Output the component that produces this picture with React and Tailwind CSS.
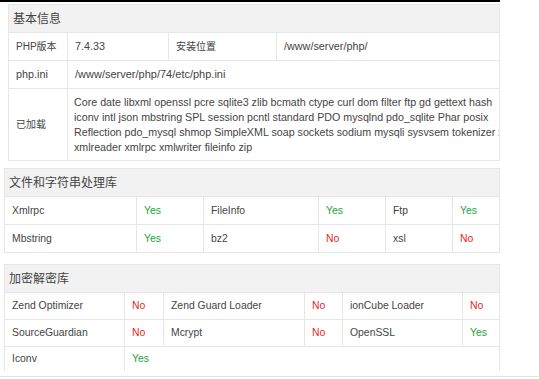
import React from "react";

const Yes = () => <span className="text-[#20a53a]">Yes</span>;
const No = () => <span className="text-[#ee1c1c]">No</span>;

const B = "border-[#e6e6e6]";

function Header({ children }) {
  return (
    <div className={`h-[28px] flex items-center pl-[4px] bg-[#f2f2f2] border-b ${B} text-[12px] text-[#444]`}>
      {children}
    </div>
  );
}

function Cell({ w, children, last, cls = "" }) {
  return (
    <div
      className={`${w} ${last ? "flex-1" : `border-r ${B}`} flex items-center pl-[7px] whitespace-nowrap overflow-hidden ${cls}`}
    >
      {children}
    </div>
  );
}

export default function App() {
  return (
    <div className="w-[539px] h-[379px] bg-white overflow-hidden font-['Liberation_Sans','Noto_Sans_CJK_SC',sans-serif] text-[10.4px] text-[#444]">
      <div className="h-[2px] w-[500px] bg-black" />

      {/* Panel 1 */}
      <div className={`ml-[8px] mt-[2px] w-[492px] border ${B} overflow-hidden`}>
        <Header>基本信息</Header>
        <div className={`flex h-[28px] border-b ${B}`}>
          <Cell w="w-[59px]" cls="text-[10px]">PHP版本</Cell>
          <Cell w="w-[101px]" cls="text-[10.8px]">7.4.33</Cell>
          <Cell w="w-[108px]" cls="text-[10px]">安装位置</Cell>
          <Cell last cls="text-[10.8px]">/www/server/php/</Cell>
        </div>
        <div className={`flex h-[28px] border-b ${B}`}>
          <Cell w="w-[59px]" cls="text-[10.8px]">php.ini</Cell>
          <Cell last cls="text-[11px]">/www/server/php/74/etc/php.ini</Cell>
        </div>
        <div className="flex h-[71px]">
          <Cell w="w-[59px]" cls="text-[10px]">已加载</Cell>
          <div className="flex-1 flex flex-col justify-center pl-[6px] overflow-hidden whitespace-nowrap leading-[15px] text-[10.7px]">
            <div>Core date libxml openssl pcre sqlite3 zlib bcmath ctype curl dom filter ftp gd gettext hash</div>
            <div>iconv intl json mbstring SPL session pcntl standard PDO mysqlnd pdo_sqlite Phar posix</div>
            <div>Reflection pdo_mysql shmop SimpleXML soap sockets sodium mysqli sysvsem tokenizer xml</div>
            <div>xmlreader xmlrpc xmlwriter fileinfo zip</div>
          </div>
        </div>
      </div>

      {/* Panel 2 */}
      <div className={`ml-[4px] mt-[7px] w-[496px] border ${B}`}>
        <Header>文件和字符串处理库</Header>
        <div className={`flex h-[28px] border-b ${B}`}>
          <Cell w="w-[132px]">Xmlrpc</Cell>
          <Cell w="w-[67px]"><Yes /></Cell>
          <Cell w="w-[115px]">FileInfo</Cell>
          <Cell w="w-[67px]"><Yes /></Cell>
          <Cell w="w-[67px]">Ftp</Cell>
          <Cell last><Yes /></Cell>
        </div>
        <div className="flex h-[27px]">
          <Cell w="w-[132px]">Mbstring</Cell>
          <Cell w="w-[67px]"><Yes /></Cell>
          <Cell w="w-[115px]">bz2</Cell>
          <Cell w="w-[67px]"><No /></Cell>
          <Cell w="w-[67px]">xsl</Cell>
          <Cell last><No /></Cell>
        </div>
      </div>

      {/* Panel 3 */}
      <div className={`ml-[4px] mt-[11px] w-[496px] border-l border-r border-t ${B}`}>
        <Header>加密解密库</Header>
        <div className={`flex h-[27px] border-b ${B}`}>
          <Cell w="w-[120px]">Zend Optimizer</Cell>
          <Cell w="w-[39px]"><No /></Cell>
          <Cell w="w-[141px]">Zend Guard Loader</Cell>
          <Cell w="w-[38px]"><No /></Cell>
          <Cell w="w-[120px]">ionCube Loader</Cell>
          <Cell last><No /></Cell>
        </div>
        <div className={`flex h-[27px] border-b ${B}`}>
          <Cell w="w-[120px]">SourceGuardian</Cell>
          <Cell w="w-[39px]"><No /></Cell>
          <Cell w="w-[141px]">Mcrypt</Cell>
          <Cell w="w-[38px]"><No /></Cell>
          <Cell w="w-[120px]">OpenSSL</Cell>
          <Cell last><Yes /></Cell>
        </div>
        <div className="flex h-[24px]">
          <Cell w="w-[120px]">Iconv</Cell>
          <div className="w-[39px] flex items-center pl-[7px]"><Yes /></div>
          <div className="flex-1" />
        </div>
      </div>

      <div className="mt-[5px] h-px w-[538px] bg-[#e3e3e3]" />
    </div>
  );
}
